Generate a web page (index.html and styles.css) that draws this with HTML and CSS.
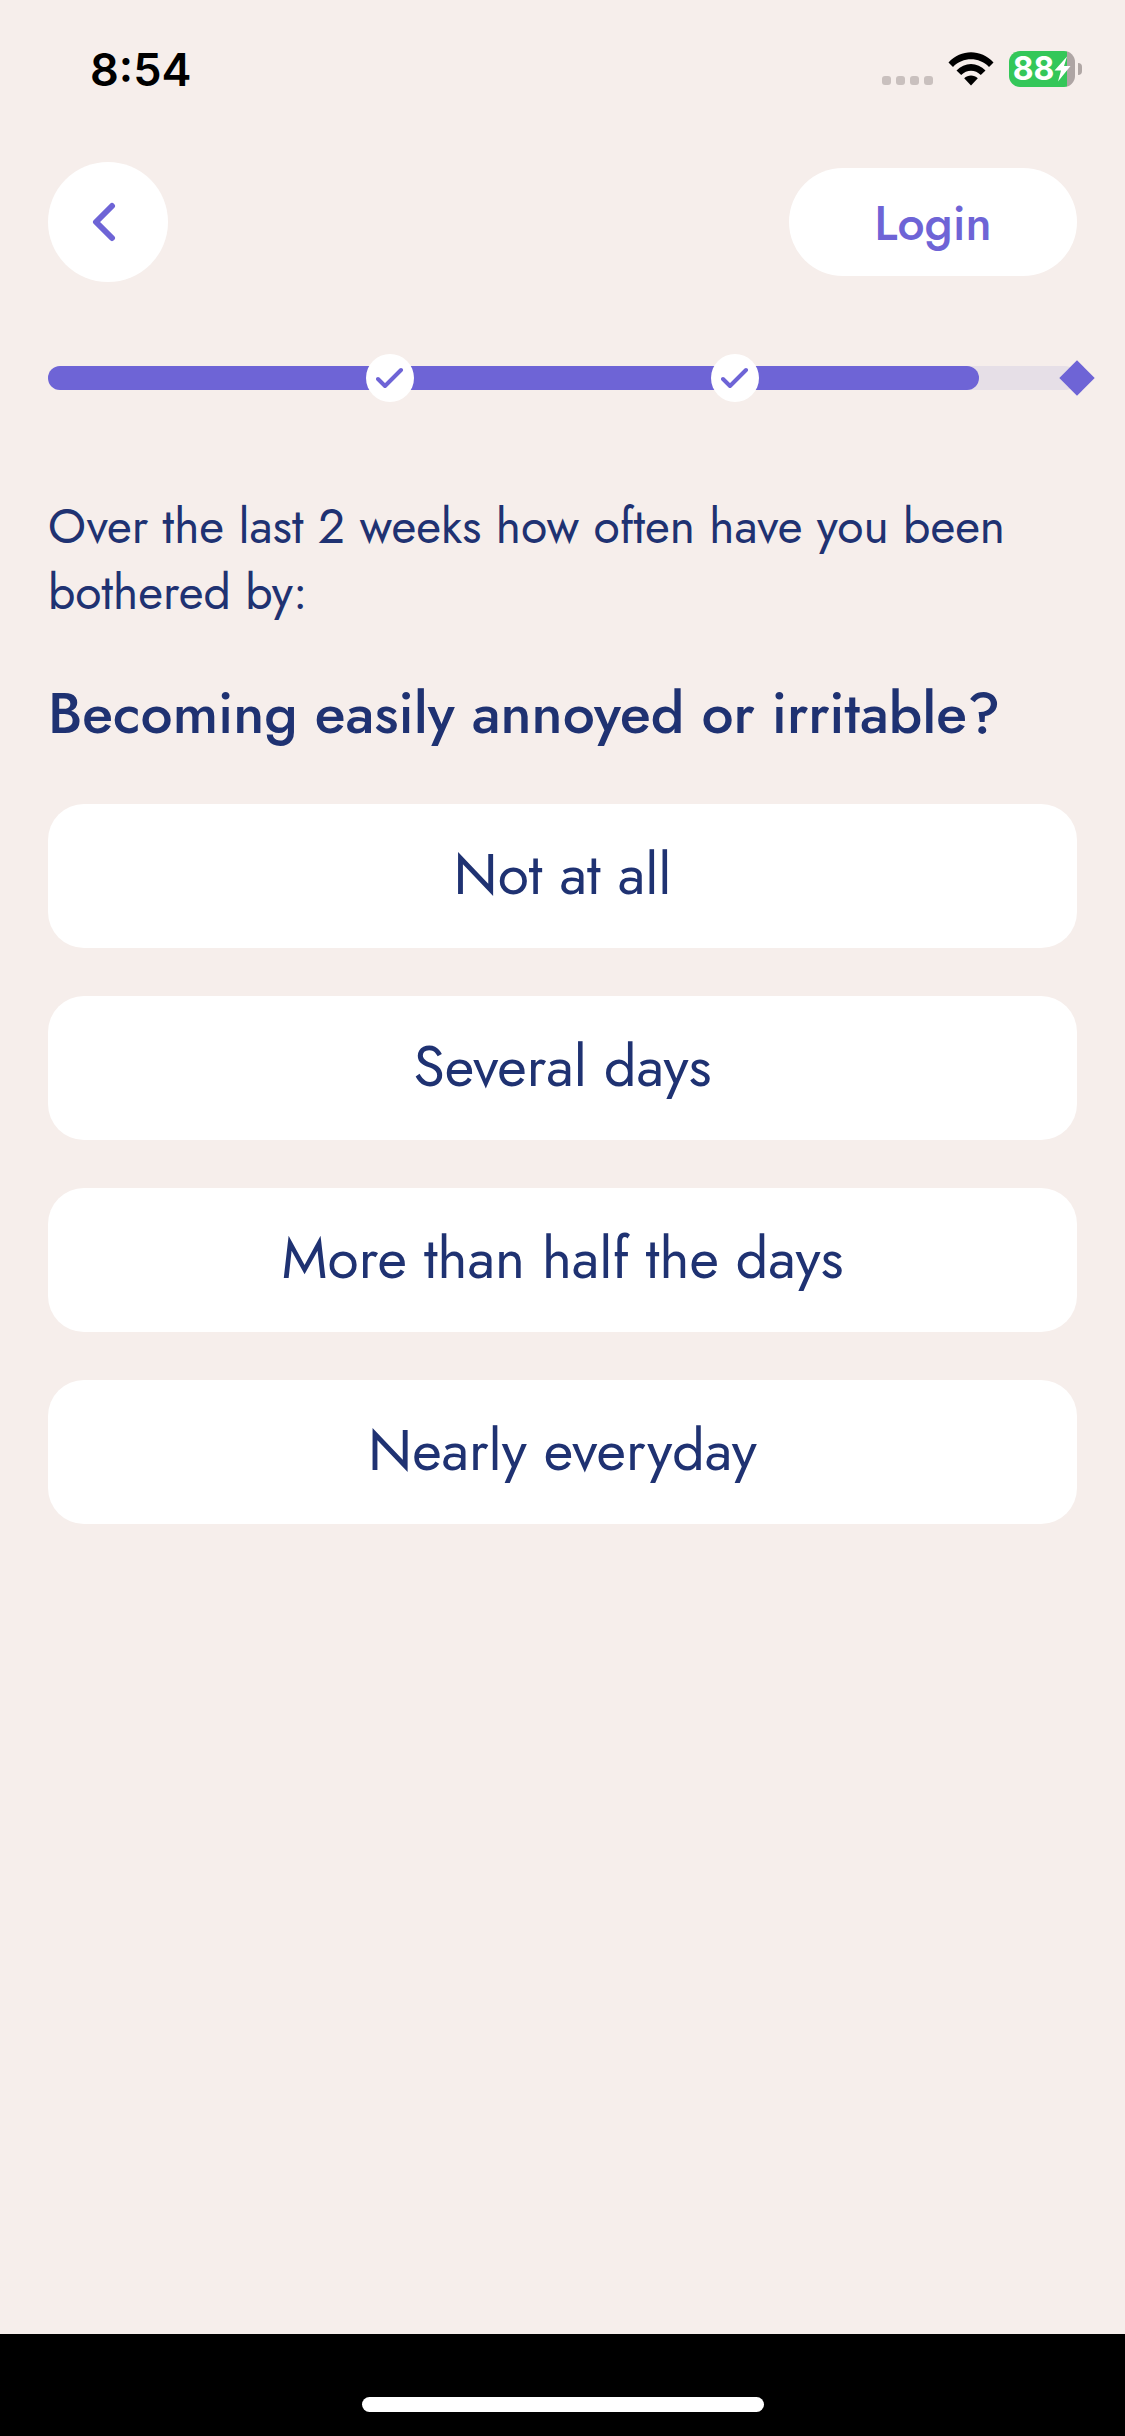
FILE: index.html
```html
<!DOCTYPE html>
<html lang="en">
  <head>
    <meta charset="UTF-8" />
    <meta name="viewport" content="width=device-width, initial-scale=1.0" />
    <title>Questionnaire</title>
    <link rel="stylesheet" href="styles.css">
  </head>
  <body>
    <!-- Status bar -->
    <div class="status-bar">
      <span class="time">8:54</span>
      <div class="status-icons">
        <svg class="signal" width="51" height="11" viewBox="0 0 51 11">
          <rect x="0" y="0" width="9" height="9" rx="3" />
          <rect x="14" y="0" width="9" height="9" rx="3" />
          <rect x="28" y="0" width="9" height="9" rx="3" />
          <rect x="42" y="0" width="9" height="9" rx="3" />
        </svg>
        <svg class="wifi" width="46" height="34" viewBox="0 0 46 34">
          <path d="M0.5 10.5C13 -3.2 33 -3.2 45.5 10.5L41 15C31 4.8 15 4.8 5 15Z" />
          <path d="M8.5 18.5C16.5 9.8 29.5 9.8 37.5 18.5L32.8 23C27.3 17.3 18.7 17.3 13.2 23Z" />
          <path d="M16.2 26.2C20 22.6 26 22.6 29.8 26.2L23 33.5Z" />
        </svg>
        <div class="battery">
          <span class="battery-level">88</span>
          <svg class="bolt" width="17" height="26" viewBox="0 0 17 26">
            <path d="M13 0.5L0.5 14.5H7L4 25.5L16.5 10H10Z" />
          </svg>
        </div>
      </div>
    </div>

    <!-- Back and login -->
    <header class="top-nav">
      <button class="back-btn" type="button" aria-label="Back">
        <svg width="24" height="40" viewBox="0 0 24 40">
          <path d="M20 4L4 20L20 36" />
        </svg>
      </button>
      <button class="login-btn" type="button">Login</button>
    </header>

    <main class="content">
      <div class="progress" role="progressbar" aria-label="Progress" aria-valuenow="90" aria-valuemin="0" aria-valuemax="100">
        <div class="progress-fill" style="width: 90.5%"></div>
        <span class="step" style="left: 33.2%">
          <svg width="28" height="22" viewBox="0 0 28 22">
            <path d="M2 12L9 19L25 3" />
          </svg>
        </span>
        <span class="step" style="left: 66.8%">
          <svg width="28" height="22" viewBox="0 0 28 22">
            <path d="M2 12L9 19L25 3" />
          </svg>
        </span>
        <span class="goal"></span>
      </div>

      <p class="intro">Over the last 2 weeks how often have you been bothered by:</p>
      <h1 class="question">Becoming easily annoyed or irritable?</h1>

      <div class="options">
        <button class="option" type="button">Not at all</button>
        <button class="option" type="button">Several days</button>
        <button class="option" type="button">More than half the days</button>
        <button class="option" type="button">Nearly everyday</button>
      </div>
    </main>

    <footer class="home-bar">
      <div class="home-indicator"></div>
    </footer>
  </body>
</html>
```
FILE: styles.css
```css
* {
  box-sizing: border-box;
}

body {
  font-family: Jost, Lato, sans-serif;
  margin: 0;
  min-height: 100vh;
  display: flex;
  flex-direction: column;
  background: #f6eeeb;
  color: #1f3272;
}

button {
  font-family: inherit;
  border: none;
  padding: 0;
  background: white;
  cursor: pointer;
}

/* Status bar */
.status-bar {
  display: flex;
  justify-content: space-between;
  align-items: center;
  height: 138px;
  padding: 0 42px 0 90px;
  color: black;
  font-family: Inter, sans-serif;
}

.time {
  font-size: 45px;
  font-weight: 600;
}

.status-icons {
  display: flex;
  align-items: center;
  gap: 15px;
}

.signal {
  fill: #c9c0be;
  align-self: flex-end;
}

.battery {
  position: relative;
  display: flex;
  align-items: center;
  justify-content: center;
  width: 66px;
  height: 36px;
  margin-right: 8px;
  border-radius: 11px;
  background: linear-gradient(to right, #34c759 88%, #aea5a4 88%);
  color: white;
}

.battery::after {
  content: "";
  position: absolute;
  top: 12px;
  right: -7px;
  width: 4px;
  height: 12px;
  border-radius: 0 4px 4px 0;
  background: #b0a7a5;
}

.battery-level {
  font-size: 32px;
  font-weight: 700;
  line-height: 36px;
}

.bolt {
  flex: none;
  fill: white;
}

/* Back and login */
.top-nav {
  display: flex;
  justify-content: space-between;
  align-items: center;
  margin-top: 24px;
  padding: 0 48px;
}

.back-btn {
  display: flex;
  align-items: center;
  justify-content: center;
  width: 120px;
  height: 120px;
  padding-right: 8px;
  border-radius: 50%;
}

.back-btn path,
.step path {
  fill: none;
  stroke: #6e64d6;
  stroke-width: 6;
  stroke-linecap: round;
  stroke-linejoin: round;
}

.login-btn {
  width: 288px;
  height: 108px;
  padding-top: 3px;
  border-radius: 54px;
  color: #6e64d6;
  font-size: 48px;
  font-weight: 500;
}

.content {
  flex: 1;
  padding: 84px 48px 48px;
}

/* Progress */
.progress {
  position: relative;
  height: 24px;
  border-radius: 12px;
  background: #e6dfe7;
}

.progress-fill {
  height: 100%;
  border-radius: 12px;
  background: #6e64d6;
}

.step {
  position: absolute;
  top: 50%;
  display: flex;
  align-items: center;
  justify-content: center;
  width: 48px;
  height: 48px;
  border-radius: 50%;
  background: white;
  transform: translate(-50%, -50%);
}

.step path {
  stroke-width: 4;
}

.goal {
  position: absolute;
  top: 50%;
  left: 100%;
  width: 25px;
  height: 25px;
  background: #6e64d6;
  transform: translate(-50%, -50%) rotate(45deg);
}

/* Question */
.intro {
  margin: 104px 0 0;
  font-size: 48px;
  line-height: 66px;
}

.question {
  margin: 46px 0 0;
  font-size: 57px;
  font-weight: 500;
  line-height: 82px;
}

.options {
  display: flex;
  flex-direction: column;
  gap: 48px;
  margin-top: 50px;
}

.option {
  height: 144px;
  padding-bottom: 5px;
  border-radius: 36px;
  color: #1f3272;
  font-size: 57px;
}

/* Home indicator */
.home-bar {
  display: flex;
  justify-content: center;
  align-items: flex-end;
  height: 102px;
  padding-bottom: 24px;
  background: black;
}

.home-indicator {
  width: 402px;
  height: 15px;
  border-radius: 8px;
  background: white;
}
```
